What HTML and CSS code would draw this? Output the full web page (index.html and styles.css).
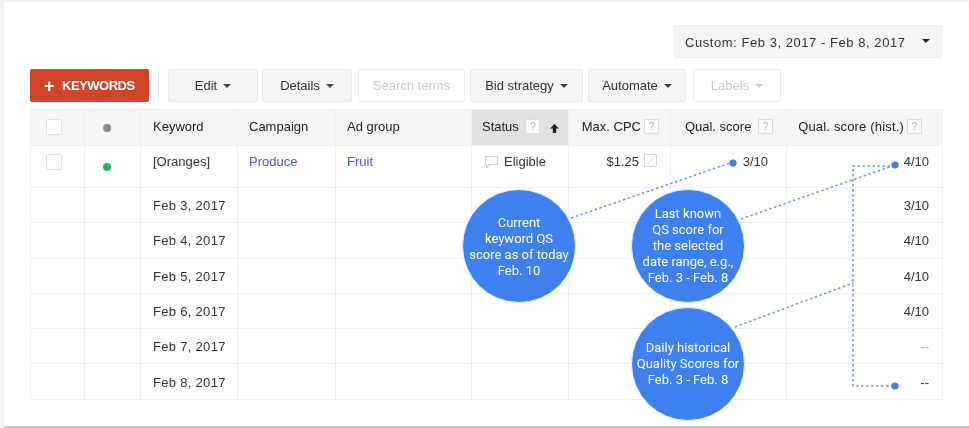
FILE: index.html
```html
<!DOCTYPE html>
<html lang="en">
<head>
<meta charset="utf-8">
<title>Keywords report</title>
<link rel="stylesheet" href="styles.css">
</head>
<body>
<main class="card">
  <div class="date-row">
    <button class="btn date">Custom: Feb 3, 2017 - Feb 8, 2017<span class="caret dark"></span></button>
  </div>
  <div class="toolbar">
    <button class="btn primary"><span class="plus">+</span>KEYWORDS</button>
    <span class="sep"></span>
    <button class="btn edit">Edit<span class="caret"></span></button>
    <button class="btn details">Details<span class="caret"></span></button>
    <button class="btn ghost search">Search terms</button>
    <button class="btn bid">Bid strategy<span class="caret"></span></button>
    <button class="btn automate">Automate<span class="caret"></span></button>
    <button class="btn ghost labels">Labels<span class="caret light"></span></button>
  </div>
  <table class="grid">
    <colgroup>
      <col class="c1"><col class="c2"><col class="c3"><col class="c4"><col class="c5"><col class="c6"><col class="c7"><col class="c8"><col class="c9">
    </colgroup>
    <thead>
      <tr>
        <th class="box"><span class="check"></span></th>
        <th class="led"><span class="dot grey"></span></th>
        <th>Keyword</th>
        <th class="tight">Campaign</th>
        <th class="tight">Ad group</th>
        <th class="sorted">Status <span class="help">?</span><span class="arrow">
          <svg width="11" height="11" viewBox="0 0 11 11"><path d="M5.5 1 10 5.6H7.2V10H3.8V5.6H1Z" fill="#222"/></svg></span></th>
        <th class="right cpc">Max. CPC<span class="help">?</span></th>
        <th class="right qs">Qual. score <span class="help">?</span></th>
        <th class="right hist">Qual. score (hist.)<span class="help">?</span></th>
      </tr>
    </thead>
    <tbody>
      <tr class="first">
        <td class="box"><span class="check"></span></td>
        <td class="led"><span class="dot green"></span></td>
        <td>[Oranges]</td>
        <td class="tight"><a href="#">Produce</a></td>
        <td class="tight"><a href="#">Fruit</a></td>
        <td class="status"><svg class="bubble" width="15" height="14" viewBox="0 0 15 14"><path d="M1.5 1.5h12v8H5.5l-3 3v-3h-1Z" fill="none" stroke="#cfcfcf" stroke-width="1.2"/></svg>Eligible</td>
        <td class="right price">$1.25<svg class="pencil" width="13" height="13" viewBox="0 0 13 13"><path d="M.5.5h12v12H.5ZM2.5 10.5 10.500 3" fill="none" stroke="#d4d4d4"/></svg></td>
        <td class="right q1">3/10</td>
        <td class="right">4/10</td>
      </tr>
      <tr><td></td><td></td><td class="day">Feb 3, 2017</td><td></td><td></td><td></td><td></td><td></td><td class="right">3/10</td></tr>
      <tr><td></td><td></td><td class="day">Feb 4, 2017</td><td></td><td></td><td></td><td></td><td></td><td class="right">4/10</td></tr>
      <tr><td></td><td></td><td class="day">Feb 5, 2017</td><td></td><td></td><td></td><td></td><td></td><td class="right">4/10</td></tr>
      <tr><td></td><td></td><td class="day">Feb 6, 2017</td><td></td><td></td><td></td><td></td><td></td><td class="right">4/10</td></tr>
      <tr><td></td><td></td><td class="day">Feb 7, 2017</td><td></td><td></td><td></td><td></td><td></td><td class="right muted">--</td></tr>
      <tr><td></td><td></td><td class="day">Feb 8, 2017</td><td></td><td></td><td></td><td></td><td></td><td class="right">--</td></tr>
    </tbody>
  </table>
  <svg class="leaders" width="969" height="428" viewBox="0 0 969 428" aria-hidden="true">
    <g fill="none" stroke="#5f97f5" stroke-width="1.500" stroke-dasharray="2.500 2.500">
      <path d="M571 218 733 162"/>
      <path d="M741 219 895 165"/>
      <path d="M735 327 853 283"/>
      <path d="M895 166H853V386H895"/>
    </g>
    <g fill="#3b7fee">
      <circle cx="733" cy="163" r="3.600"/>
      <circle cx="895" cy="165" r="3.600"/>
      <circle cx="895" cy="386" r="3.600"/>
    </g>
  </svg>
  <div class="bubble-note n1">Current<br>keyword QS<br>score as of today<br>Feb. 10</div>
  <div class="bubble-note n2">Last known<br>QS score for<br>the selected<br>date range, e.g.,<br>Feb. 3 - Feb. 8</div>
  <div class="bubble-note n3">Daily historical<br>Quality Scores for<br>Feb. 3 - Feb. 8</div>
</main>
</body>
</html>
```
FILE: styles.css
```css
* { box-sizing: border-box; }
html, body { margin: 0; height: 428px; overflow: hidden; }
body {
  background: #f4f4f4;
  font-family: "Liberation Sans", Arial, sans-serif;
  font-size: 13px;
  color: #333;
}
.card {
  position: relative;
  height: 424px;
  margin: 2px 0 0 4px;
  padding: 23px 27px 0 26px;
  background: #fff;
  box-shadow: 0 2px 1px #c4c4c4;
  filter: blur(0.45px);
}
.date-row { display: flex; justify-content: flex-end; height: 44px; }
.btn {
  display: inline-flex;
  align-items: center;
  justify-content: center;
  height: 33px;
  padding: 0;
  border: 1px solid #e8e9e9;
  border-radius: 2px;
  background: #f4f5f5;
  font: inherit;
  color: #333;
}
.date {
  width: 268px;
  justify-content: space-between;
  padding: 1px 11px 0 10px;
  letter-spacing: .55px;
  border-color: #eeeeee;
}
.toolbar { display: flex; align-items: center; gap: 4px; height: 33px; margin-bottom: 7px; }
.primary {
  width: 119px;
  margin-right: 5px;
  justify-content: flex-start;
  padding-left: 13px;
  background: #d24429;
  border-color: #d24429;
  color: #fff;
  font-weight: 700;
  letter-spacing: -.5px;
}
.plus { font-size: 18px; line-height: 1; margin-right: 8px; }
.sep { width: 1px; height: 33px; margin-right: 5px; background: #e6e6e6; }
.edit { width: 90px; }
.details { width: 90px; margin-right: 2px; }
.search { width: 107px; margin-right: 1px; }
.bid { width: 113px; margin-right: 1px; }
.automate { width: 98px; margin-right: 3px; }
.labels { width: 88px; }
.ghost { background: #fff; color: #c9c9c9; border-color: #ececec; }
.caret {
  width: 0;
  height: 0;
  margin-left: 6px;
  border-left: 4px solid transparent;
  border-right: 4px solid transparent;
  border-top: 4px solid #444;
}
.caret.dark { border-top-color: #222; margin-top: -3px; }
.caret.light { border-top-color: #ccc; }
.grid {
  width: 912px;
  table-layout: fixed;
  border-collapse: collapse;
  border: 1px solid #eeeeee;
}
.c1 { width: 54px; } .c2 { width: 56px; } .c3 { width: 97px; }
.c4 { width: 98px; } .c5 { width: 136px; } .c6 { width: 97px; }
.c7 { width: 102px; } .c8 { width: 116px; } .c9 { width: 156px; }
.grid th, .grid td {
  padding: 0 12px;
  border: 1px solid #efefef;
  font-weight: 400;
  text-align: left;
  white-space: nowrap;
  overflow: hidden;
}
.grid th { height: 36px; line-height: 15px; background: #f4f5f5; color: #222; padding-bottom: 2px; }
.grid td { height: 35.300px; padding-top: 1px; }
.grid .first td { height: 42px; padding-top: 0; padding-bottom: 10px; }
.grid .tight { padding-left: 11px; }
.grid .box { padding-left: 15px; }
.grid .led { padding-left: 18px; }
.grid .first .box, .grid .first .led { padding-bottom: 10px; }
.grid .right { text-align: right; padding-right: 13px; }
.grid th.cpc { padding-right: 11px; }
.grid th.qs { padding-right: 13px; }
.grid th.hist { padding-right: 20px; letter-spacing: .17px; padding-left: 0; }
.grid th.sorted { background: #e0e1e1; padding: 0 0 2px 10px; position: relative; }
.day { letter-spacing: .3px; }
.arrow { position: absolute; right: 8px; top: 12px; }
.bubble { vertical-align: -3px; margin-right: 5px; }
.pencil { vertical-align: -1px; margin-left: 5px; }
.grid .q1 { padding-bottom: 12px; padding-right: 18px; }
.check {
  display: inline-block;
  width: 16px;
  height: 16px;
  border: 1px solid #e2e2e2;
  border-radius: 2px;
  background: #fff;
  vertical-align: middle;
}
.dot { display: inline-block; width: 8px; height: 8px; border-radius: 50%; vertical-align: middle; }
.dot.grey { background: #8a8a8a; }
.dot.green { background: #1db954; margin-top: 10px; }
.help {
  display: inline-block;
  width: 15px;
  height: 15px;
  margin-left: 3px;
  border: 1px solid #dcdcdc;
  background: #fbfbfb;
  color: #b5b5b5;
  font-size: 10px;
  line-height: 13px;
  text-align: center;
  vertical-align: top;
}
a { color: #3f5fd0; text-decoration: none; }
.muted { color: #aaa; }
.leaders { position: absolute; left: -4px; top: -2px; pointer-events: none; }
.bubble-note {
  position: absolute;
  display: flex;
  align-items: center;
  justify-content: center;
  width: 114px;
  height: 114px;
  border-radius: 50%;
  background: #3f80ef;
  border: 1px solid #eaf1fd;
  color: #fff;
  font-family: Roboto, "Liberation Sans", sans-serif;
  font-size: 13px;
  line-height: 16px;
  text-align: center;
}
.n1 { left: 458px; top: 187px; padding-top: 2px; }
.n2 { left: 627px; top: 187px; }
.n3 { left: 627px; top: 305px; }
```
